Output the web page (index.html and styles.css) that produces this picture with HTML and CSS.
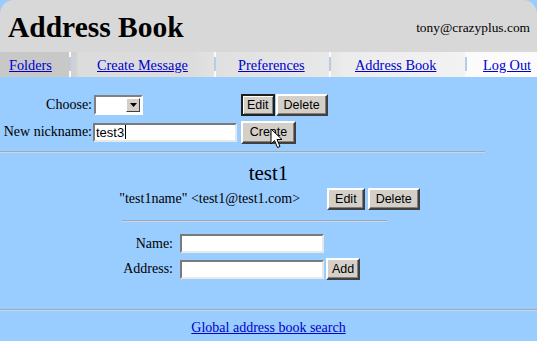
FILE: index.html
```html
<!DOCTYPE html>
<html>
<head>
<meta charset="utf-8">
<link rel="stylesheet" href="styles.css">
</head>
<body>
<header class="top">
  <h1 class="title">Address Book</h1>
  <span class="user">tony@crazyplus.com</span>
</header>
<nav class="tabs">
  <div class="tab tab-folders"><a href="#">Folders</a></div>
  <div class="sep"></div>
  <div class="tab tab-compose"><a href="#">Create Message</a></div>
  <div class="sep"></div>
  <div class="tab tab-prefs"><a href="#">Preferences</a></div>
  <div class="sep"></div>
  <div class="tab tab-abook"><a href="#">Address Book</a></div>
  <div class="sep"></div>
  <div class="tab tab-logout"><a href="#">Log Out</a></div>
</nav>
<main class="content">
  <form class="nick">
    <label class="lbl">Choose:</label>
    <div class="ctrl"><span class="select"><span class="select-box"></span><span class="select-btn"><svg width="7" height="4" viewBox="0 0 7 4"><path d="M0 0H7L3.5 4Z" fill="#000"/></svg></span></span></div>
    <div class="btns"><button type="button" class="btn btn-focus">Edit</button><button type="button" class="btn">Delete</button></div>
    <label class="lbl">New nickname:</label>
    <div class="ctrl"><span class="field field-nick">test3<span class="caret"></span></span></div>
    <div class="btns btns-create"><button type="button" class="btn btn-create">Create</button>
      <svg class="pointer" width="14" height="21" viewBox="0 0 14 21"><path d="M1 1V16L4.5 12.5L7.5 19.5L10 18.5L7 11.5H12Z" fill="#fff" stroke="#000" stroke-width="1" stroke-linejoin="miter"/></svg>
    </div>
  </form>
  <hr class="rule rule-top">
  <section class="entry">
    <h2 class="entry-name">test1</h2>
    <div class="entry-row">
      <span class="entry-addr">"test1name" &lt;test1@test1.com&gt;</span>
      <span class="btns btns-entry"><button type="button" class="btn">Edit</button><button type="button" class="btn">Delete</button></span>
    </div>
  </section>
  <hr class="rule rule-mid">
  <form class="add">
    <label class="lbl">Name:</label>
    <div class="ctrl"><span class="field"></span></div>
    <div></div>
    <label class="lbl">Address:</label>
    <div class="ctrl"><span class="field"></span></div>
    <div><button type="button" class="btn btn-add">Add</button></div>
  </form>
  <hr class="rule rule-full">
  <div class="search"><a href="#">Global address book search</a></div>
</main>
</body>
</html>
```
FILE: styles.css
```css
html, body {
  margin: 0;
  padding: 0;
}
body {
  width: 537px;
  height: 341px;
  overflow: hidden;
  background: #99ccff;
  font-family: "Liberation Serif", "Times New Roman", serif;
  color: #000;
}
a {
  color: #0000cc;
  text-decoration: underline;
}
.top {
  height: 52px;
  background: #d8d8d8;
  border-top-left-radius: 14px;
  border-top-right-radius: 14px;
  display: flex;
  align-items: flex-start;
  justify-content: space-between;
  padding: 0 7px 0 8px;
  box-sizing: border-box;
}
.title {
  margin: 0;
  font-size: 29.5px;
  font-weight: bold;
  line-height: 34px;
  padding-top: 10px;
}
.user {
  font-size: 13.4px;
  line-height: 16px;
  padding-top: 20px;
}
.tabs {
  height: 25px;
  display: flex;
  background: #fafafa;
  font-size: 14.3px;
}
.tab {
  display: flex;
  align-items: flex-start;
  padding-top: 5px;
  box-sizing: border-box;
  line-height: 16px;
}
.sep {
  width: 2px;
  margin: 5px 0 6px;
  background: #b8cce4;
}
.tab-folders {
  width: 69px;
  padding-left: 9px;
  background: #c8c8c8;
}
.tab-compose {
  width: 143px;
  padding-left: 26px;
  background: linear-gradient(to right, #d0d0d0 0, #d0d0d0 4px, #dcdcdc 8px, #dcdcdc 120px, #e2e2e2);
}
.tab-prefs {
  width: 113px;
  padding-left: 22px;
  background: linear-gradient(to right, #e0e0e0, #e8e8e8);
}
.tab-abook {
  width: 134px;
  padding-left: 24px;
  background: linear-gradient(to right, #e6e6e6 0, #ececec 14px, #f2f2f2);
}
.tab-logout {
  flex: 1;
  padding-left: 16px;
  background: #fbfbfb;
}
.content {
  border-top-right-radius: 10px;
  background: #99ccff;
  padding-top: 17px;
}
.nick {
  display: grid;
  grid-template-columns: 93px 148px auto;
  grid-template-rows: 21px 22px;
  row-gap: 6px;
  align-items: center;
  font-size: 14px;
}
.lbl {
  text-align: right;
  padding-right: 2px;
  line-height: 16px;
}
.nick .lbl {
  padding-right: 1px;
}
.ctrl {
  display: flex;
  align-items: center;
}
.select {
  display: inline-flex;
  width: 49px;
  height: 20px;
  box-sizing: border-box;
  border: 2px solid;
  border-color: #808080 #fff #fff #808080;
  background: #fff;
  padding: 1px;
  margin-top: 1px;
  margin-left: 1px;
}
.select-box {
  flex: 1;
}
.select-btn {
  width: 14px;
  box-sizing: border-box;
  background: #d4d0c8;
  border: 1px solid;
  border-color: #fff #404040 #404040 #fff;
  display: flex;
  align-items: center;
  justify-content: center;
}
.field {
  display: block;
  width: 144px;
  height: 19px;
  box-sizing: border-box;
  background: #fff;
  border: 2px solid;
  border-color: #7a7a7a #e8e8e8 #e8e8e8 #7a7a7a;
  font-family: "Liberation Sans", Arial, sans-serif;
  font-size: 13px;
  line-height: 15px;
  padding-left: 1px;
  white-space: nowrap;
}
.field-nick {
  width: 144px;
}
.caret {
  display: inline-block;
  width: 1px;
  height: 14px;
  background: #000;
  vertical-align: -2px;
  margin-left: 1px;
}
.btns {
  display: flex;
  gap: 1px;
}
.btns-entry {
  gap: 3px;
}
.btns-create {
  position: relative;
}
.btn {
  font-family: "Liberation Sans", Arial, sans-serif;
  font-size: 12.5px;
  background: #d4d0c8;
  color: #000;
  border: 2px solid;
  border-color: #fff #404040 #404040 #fff;
  box-shadow: inset -1px -1px 0 #808080;
  height: 22px;
  padding: 0 6px;
  margin: 0;
  line-height: 16px;
}
.btn-focus {
  border-color: #202020;
  box-shadow: inset 1px 1px 0 #fff, inset -1px -1px 0 #808080;
  padding: 0 4px;
}
.btn-create {
  width: 55px;
  height: 23px;
  padding: 0;
}
.pointer {
  position: absolute;
  left: 29px;
  top: 7px;
}
.rule {
  border: 0;
  height: 2px;
  margin: 0;
  background: linear-gradient(#a0a8b0 50%, #c0d8f0 50%);
}
.rule-top {
  width: 485px;
  margin-top: 8px;
}
.entry {
  text-align: center;
}
.entry-name {
  margin: 8px 0 0;
  font-size: 21px;
  font-weight: normal;
  line-height: 24px;
}
.entry-row {
  display: flex;
  justify-content: center;
  align-items: center;
  gap: 27px;
  margin-top: 3px;
  padding-left: 2px;
}
.entry-addr {
  font-size: 14px;
}
.rule-mid {
  width: 265px;
  margin: 10px 0 0 122px;
}
.add {
  display: grid;
  grid-template-columns: 176px 148px auto;
  grid-template-rows: 19px 22px;
  row-gap: 5px;
  align-items: center;
  margin-top: 12px;
  font-size: 14px;
}
.add .lbl {
  padding-right: 3px;
}
.add .field {
  margin-left: 4px;
}
.btn-add {
  padding: 0 4px;
  margin-left: 2px;
}
.rule-full {
  width: 100%;
  margin-top: 29px;
}
.search {
  text-align: center;
  font-size: 14px;
  margin-top: 9px;
}
```
